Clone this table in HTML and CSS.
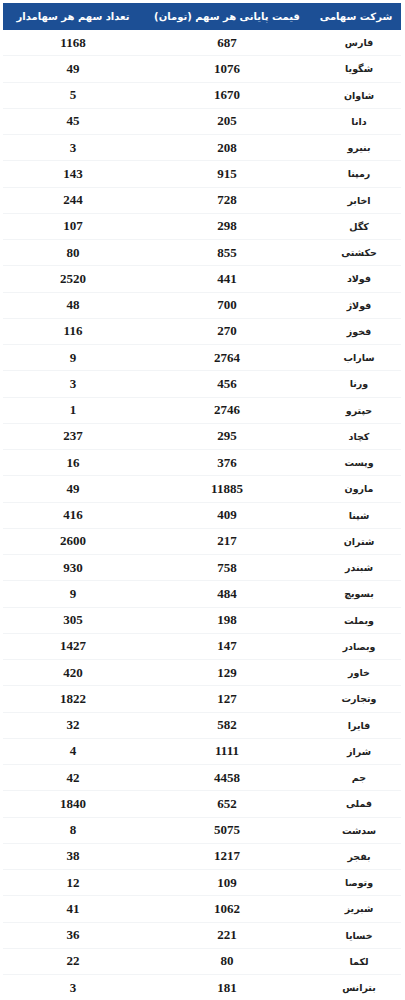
FILE: index.html
```html
<!DOCTYPE html>
<html lang="fa" dir="rtl">
<head>
<meta charset="utf-8">
<link rel="stylesheet" href="styles.css">
</head>
<body>
<table class="stocks">
<thead>
<tr><th class="c-name">شرکت سهامی</th><th class="c-price">قیمت پایانی هر سهم (تومان)</th><th class="c-count">تعداد سهم هر سهامدار</th></tr>
</thead>
<tbody>
<tr><td class="name">فارس</td><td>687</td><td>1168</td></tr>
<tr><td class="name">شگویا</td><td>1076</td><td>49</td></tr>
<tr><td class="name">شاوان</td><td>1670</td><td>5</td></tr>
<tr><td class="name">دانا</td><td>205</td><td>45</td></tr>
<tr><td class="name">بنیرو</td><td>208</td><td>3</td></tr>
<tr><td class="name">رمپنا</td><td>915</td><td>143</td></tr>
<tr><td class="name">اخابر</td><td>728</td><td>244</td></tr>
<tr><td class="name">کگل</td><td>298</td><td>107</td></tr>
<tr><td class="name">حکشتی</td><td>855</td><td>80</td></tr>
<tr><td class="name">فولاد</td><td>441</td><td>2520</td></tr>
<tr><td class="name">فولاژ</td><td>700</td><td>48</td></tr>
<tr><td class="name">فخوز</td><td>270</td><td>116</td></tr>
<tr><td class="name">ساراب</td><td>2764</td><td>9</td></tr>
<tr><td class="name">ورنا</td><td>456</td><td>3</td></tr>
<tr><td class="name">حپترو</td><td>2746</td><td>1</td></tr>
<tr><td class="name">کچاد</td><td>295</td><td>237</td></tr>
<tr><td class="name">وپست</td><td>376</td><td>16</td></tr>
<tr><td class="name">مارون</td><td>11885</td><td>49</td></tr>
<tr><td class="name">شپنا</td><td>409</td><td>416</td></tr>
<tr><td class="name">شتران</td><td>217</td><td>2600</td></tr>
<tr><td class="name">شبندر</td><td>758</td><td>930</td></tr>
<tr><td class="name">بسویچ</td><td>484</td><td>9</td></tr>
<tr><td class="name">وبملت</td><td>198</td><td>305</td></tr>
<tr><td class="name">وبصادر</td><td>147</td><td>1427</td></tr>
<tr><td class="name">خاور</td><td>129</td><td>420</td></tr>
<tr><td class="name">وتجارت</td><td>127</td><td>1822</td></tr>
<tr><td class="name">فایرا</td><td>582</td><td>32</td></tr>
<tr><td class="name">شراز</td><td>1111</td><td>4</td></tr>
<tr><td class="name">جم</td><td>4458</td><td>42</td></tr>
<tr><td class="name">فملی</td><td>652</td><td>1840</td></tr>
<tr><td class="name">سدشت</td><td>5075</td><td>8</td></tr>
<tr><td class="name">بفجر</td><td>1217</td><td>38</td></tr>
<tr><td class="name">وتوصا</td><td>109</td><td>12</td></tr>
<tr><td class="name">شبریز</td><td>1062</td><td>41</td></tr>
<tr><td class="name">خسایا</td><td>221</td><td>36</td></tr>
<tr><td class="name">لکما</td><td>80</td><td>22</td></tr>
<tr><td class="name">بترانس</td><td>181</td><td>3</td></tr>
</tbody>
</table>
</body>
</html>
```
FILE: styles.css
```css
html, body {
  margin: 0;
  padding: 0;
  background: #ffffff;
}
body {
  padding: 3px 4px 0 3px;
}
.stocks {
  width: 398px;
  border-collapse: collapse;
  table-layout: fixed;
  direction: rtl;
}
.stocks th {
  background: #1c4f95;
  color: #ffffff;
  font-family: "DejaVu Sans", sans-serif;
  font-weight: bold;
  font-size: 10px;
  height: 27px;
  padding: 0;
  text-align: center;
  vertical-align: middle;
}
.c-name { width: 90px; }
.c-price { width: 168px; }
.c-count { width: 140px; }
.stocks td {
  height: 25.25px;
  padding: 0;
  text-align: center;
  vertical-align: middle;
  font-family: "Liberation Serif", "Times New Roman", serif;
  font-weight: bold;
  font-size: 13px;
  color: #1a1a1a;
  border-bottom: 1px solid #f2f4f6;
}
.stocks td.name {
  font-family: "DejaVu Sans", sans-serif;
  font-size: 9.5px;
  font-weight: bold;
  color: #222222;
  padding-right: 0;
  padding-left: 6px;
}
```
